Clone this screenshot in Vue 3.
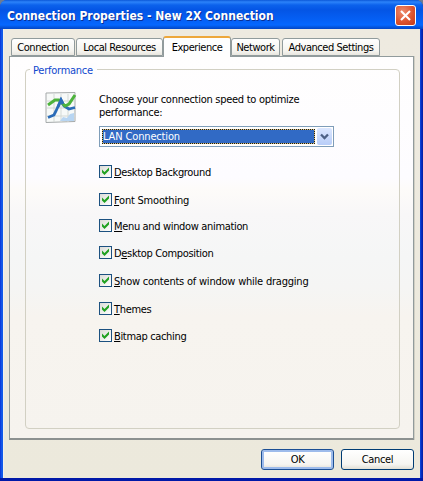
<script setup>
import { ref } from 'vue'

const tabs = [
  { label: 'Connection', cls: 'tab-connection' },
  { label: 'Local Resources', cls: 'tab-local' },
  { label: 'Experience', cls: 'tab-experience' },
  { label: 'Network', cls: 'tab-network' },
  { label: 'Advanced Settings', cls: 'tab-advanced' },
]
const active = ref('Experience')

const options = ref([
  { pre: '', key: 'D', post: 'esktop Background', gap: 15, on: true },
  { pre: '', key: 'F', post: 'ont Smoothing', gap: 13, on: true },
  { pre: '', key: 'M', post: 'enu and window animation', gap: 14, on: true },
  { pre: 'D', key: 'e', post: 'sktop Composition', gap: 15, on: true },
  { pre: '', key: 'S', post: 'how contents of window while dragging', gap: 15, on: true },
  { pre: '', key: 'T', post: 'hemes', gap: 14, on: true },
  { pre: '', key: 'B', post: 'itmap caching', gap: 0, on: true },
])
</script>

<template>
  <div class="dialog">
    <header class="titlebar">
      <h1>Connection Properties - New 2X Connection</h1>
      <button class="close" aria-label="Close">
        <svg width="17" height="17" viewBox="0 0 17 17"><path d="M4 4L13 13M13 4L4 13" stroke="#fff" stroke-width="2.1" /></svg>
      </button>
    </header>
    <main class="client">
      <nav class="tabs">
        <button v-for="t in tabs" :key="t.label" class="tab" :class="[t.cls, { active: active === t.label }]" @click="active = t.label"><span>{{ t.label }}</span></button>
      </nav>
      <section class="page">
        <div class="group">
          <div class="legend"><span>Performance</span></div>
          <div class="body">
            <svg class="chart" width="32" height="32" viewBox="0 0 32 32">
              <path d="M1 1L30 0.5V29.5L1 30.5Z" fill="#f7f9f8" stroke="#a5a9aa" />
              <path d="M2 9H30M2 16H30M2 24H30M9 2V30M16 2V30M23 2V30" stroke="#d3d8d5" />
              <path d="M15 29L18 25L22 26L25 22L29 21V29Z" fill="#b8d5f2" />
              <path d="M3 25.5L9 23L11 19L16 8L19 14L24 17L30 15.5" fill="none" stroke="#2b6cb8" stroke-width="2.8" />
              <path d="M3 13L10 8L14 8L20 14L24 12L30 3" fill="none" stroke="#4db33c" stroke-width="3" />
              <path d="M13 15L16 8L18 12" fill="none" stroke="#2b6cb8" stroke-width="2.8" />
            </svg>
            <div class="fields">
              <p class="prompt">Choose your connection speed to optimize<br />performance:</p>
              <div class="combo">
                <div class="value">LAN Connection</div>
                <div class="arrow">
                  <svg width="15" height="17" viewBox="0 0 15 17"><path d="M4 6.5L7.5 10L11 6.5" fill="none" stroke="#4d6185" stroke-width="2.3" /></svg>
                </div>
              </div>
              <div class="options">
                <label v-for="o in options" :key="o.key" class="option" :style="{ marginBottom: o.gap + 'px' }" @click="o.on = !o.on">
                  <span class="box">
                    <svg v-if="o.on" width="11" height="11" viewBox="0 0 11 11"><path d="M2 3.5L4.5 6L9 1.5V4.5L4.5 9L2 6.5Z" fill="#21a121" /></svg>
                  </span>
                  <span class="text" :class="{ wide: o.key === 'S' || o.key === 'F' }">{{ o.pre }}<span class="key">{{ o.key }}</span>{{ o.post }}</span>
                </label>
              </div>
            </div>
          </div>
        </div>
      </section>
      <footer class="actions">
        <button class="btn ok">OK</button>
        <button class="btn cancel">Cancel</button>
      </footer>
    </main>
  </div>
</template>

<style>
body { margin: 0; background: #6d7c93; overflow: hidden; }
</style>

<style scoped>
* { box-sizing: border-box; }
button { padding: 0; margin: 0; font: inherit; color: inherit; letter-spacing: inherit; white-space: nowrap; }
.dialog {
  width: 423px; height: 481px; display: flex; flex-direction: column;
  background: linear-gradient(90deg, #0831d9 0, #1660ea 2px, #0c54e8 3px, #0c50e0 420px, #0831c9 421px, #001ea0 423px);
  border-radius: 7px 7px 0 0; overflow: hidden; padding-bottom: 3px;
  color: #000;
  font: 11px/13px "DejaVu Sans Condensed", "DejaVu Sans", sans-serif; font-stretch: condensed;
  letter-spacing: -0.34px;
  box-shadow: inset 0 -3px 0 #0018a8;
}
.titlebar {
  height: 29px; flex: none; display: flex; justify-content: space-between; align-items: center;
  padding: 3px 7px 0 7px;
  background: linear-gradient(180deg, #0b58d8 0, #2c83fa 2px, #0c62ec 5px, #0455e5 10px, #0560f5 20px, #0567ff 25px, #0456e0 27px, #0345c5 29px);
}
h1 { margin: 0; color: #fff; font: bold 12px/16px "DejaVu Sans Condensed", "DejaVu Sans", sans-serif; font-stretch: condensed; letter-spacing: 0.02px; text-shadow: 1px 1px #0a2f94; white-space: nowrap; }
.close { width: 21px; height: 21px; margin-top: -1px; display: grid; place-items: center; border: 1px solid #fff; border-radius: 3px; background: radial-gradient(circle at 35% 30%, #ed8c6e, #de5530 55%, #c43a16); }
.close svg { display: block; }
.client { margin: 0 3px; flex: 1; background: linear-gradient(#eeeae0, #ece9dc); padding: 7px 6px 0 5px; display: flex; flex-direction: column; min-height: 0; border-left: 1px solid #f3f0ea; }
.tabs { height: 20px; flex: none; display: flex; align-items: flex-end; padding-left: 2px; position: relative; z-index: 1; }
.tab { height: 18px; border: 1px solid #919b9c; border-radius: 3px 3px 0 0; background: linear-gradient(#fff, #f5f4ef 75%, #e8e6df); letter-spacing: -0.45px; }
.tab span { display: block; text-align: center; line-height: 17px; }
.tab-connection { width: 64px; margin-right: 1px; }
.tab-local { width: 87px; }
.tab-experience { width: 68px; }
.tab-network { width: 49px; margin-right: 2px; }
.tab-advanced { width: 98px; }
.tab.active { height: 21px; margin-bottom: -1px; border-top: 2px solid #eda73c; border-bottom: 0; background: #fefefe; }
.tab.active span { margin-top: -1px; }
.page { height: 384px; flex: none; border: 1px solid #919b9c; border-bottom: 2px solid #8c9190; box-shadow: 1px 0 #d1cfc4; padding: 12px 13px 9px 15px; background: linear-gradient(#fffefe 0, #fdfcff 120px, #fdfbf9 132px, #f8f7f8 158px, #f5f6f6 200px, #f5f5f4 230px, #f7f4ef 260px, #f6f3ee 100%); }
.group { height: 360px; border: 1px solid #d2d0c3; border-radius: 4px; }
.legend { height: 13px; margin-top: -7px; padding-left: 4px; }
.legend span { display: inline-block; width: 67px; padding: 0 3px; background: #fefdfe; color: #1048cd; line-height: 15px; vertical-align: top; letter-spacing: -0.25px; }
.body { display: flex; padding: 16px 0 0 19px; }
.chart { flex: none; margin-right: 22px; }
.prompt { margin: 1px 0 0; height: 33px; line-height: 13px; white-space: nowrap; letter-spacing: -0.28px; }
.combo { width: 235px; height: 21px; border: 1px solid #7f9db9; background: #fff; padding: 2px 1px 2px 2px; display: flex; justify-content: space-between; }
.value { width: 213px; height: 15px; background: linear-gradient(#316ac5, #316ac5) padding-box, #d5bd80; color: #fff; line-height: 14px; border: 1px dotted #1d1d18; padding-left: 0; letter-spacing: -0.15px; }
.arrow { width: 15px; height: 17px; margin-top: -1px; border-radius: 2px; background: linear-gradient(#dce7ff, #b8cdf8); }
.arrow svg { display: block; }
.options { padding-top: 18px; }
.option { display: flex; height: 13px; align-items: center; }
.box { width: 13px; height: 13px; flex: none; border: 1px solid #1c5180; background: linear-gradient(135deg, #dcdcd7, #fff); }
.box svg { display: block; }
.text { padding: 1px 0 0 2px; white-space: nowrap; line-height: 13px; }
.text.wide { letter-spacing: -0.22px; }
.key { text-decoration: underline; text-underline-offset: 1px; text-decoration-skip-ink: none; text-decoration-thickness: 1px; }
.actions { display: flex; justify-content: flex-end; gap: 7px; padding-top: 9px; }
.btn { height: 21px; width: 73px; border: 1px solid #003c74; border-radius: 3px; background: linear-gradient(#fff, #f6f5f1 75%, #e2dfd5); }
.ok { border-color: #1c4f94; box-shadow: inset 0 0 0 2px #9dbbeb; }
</style>
